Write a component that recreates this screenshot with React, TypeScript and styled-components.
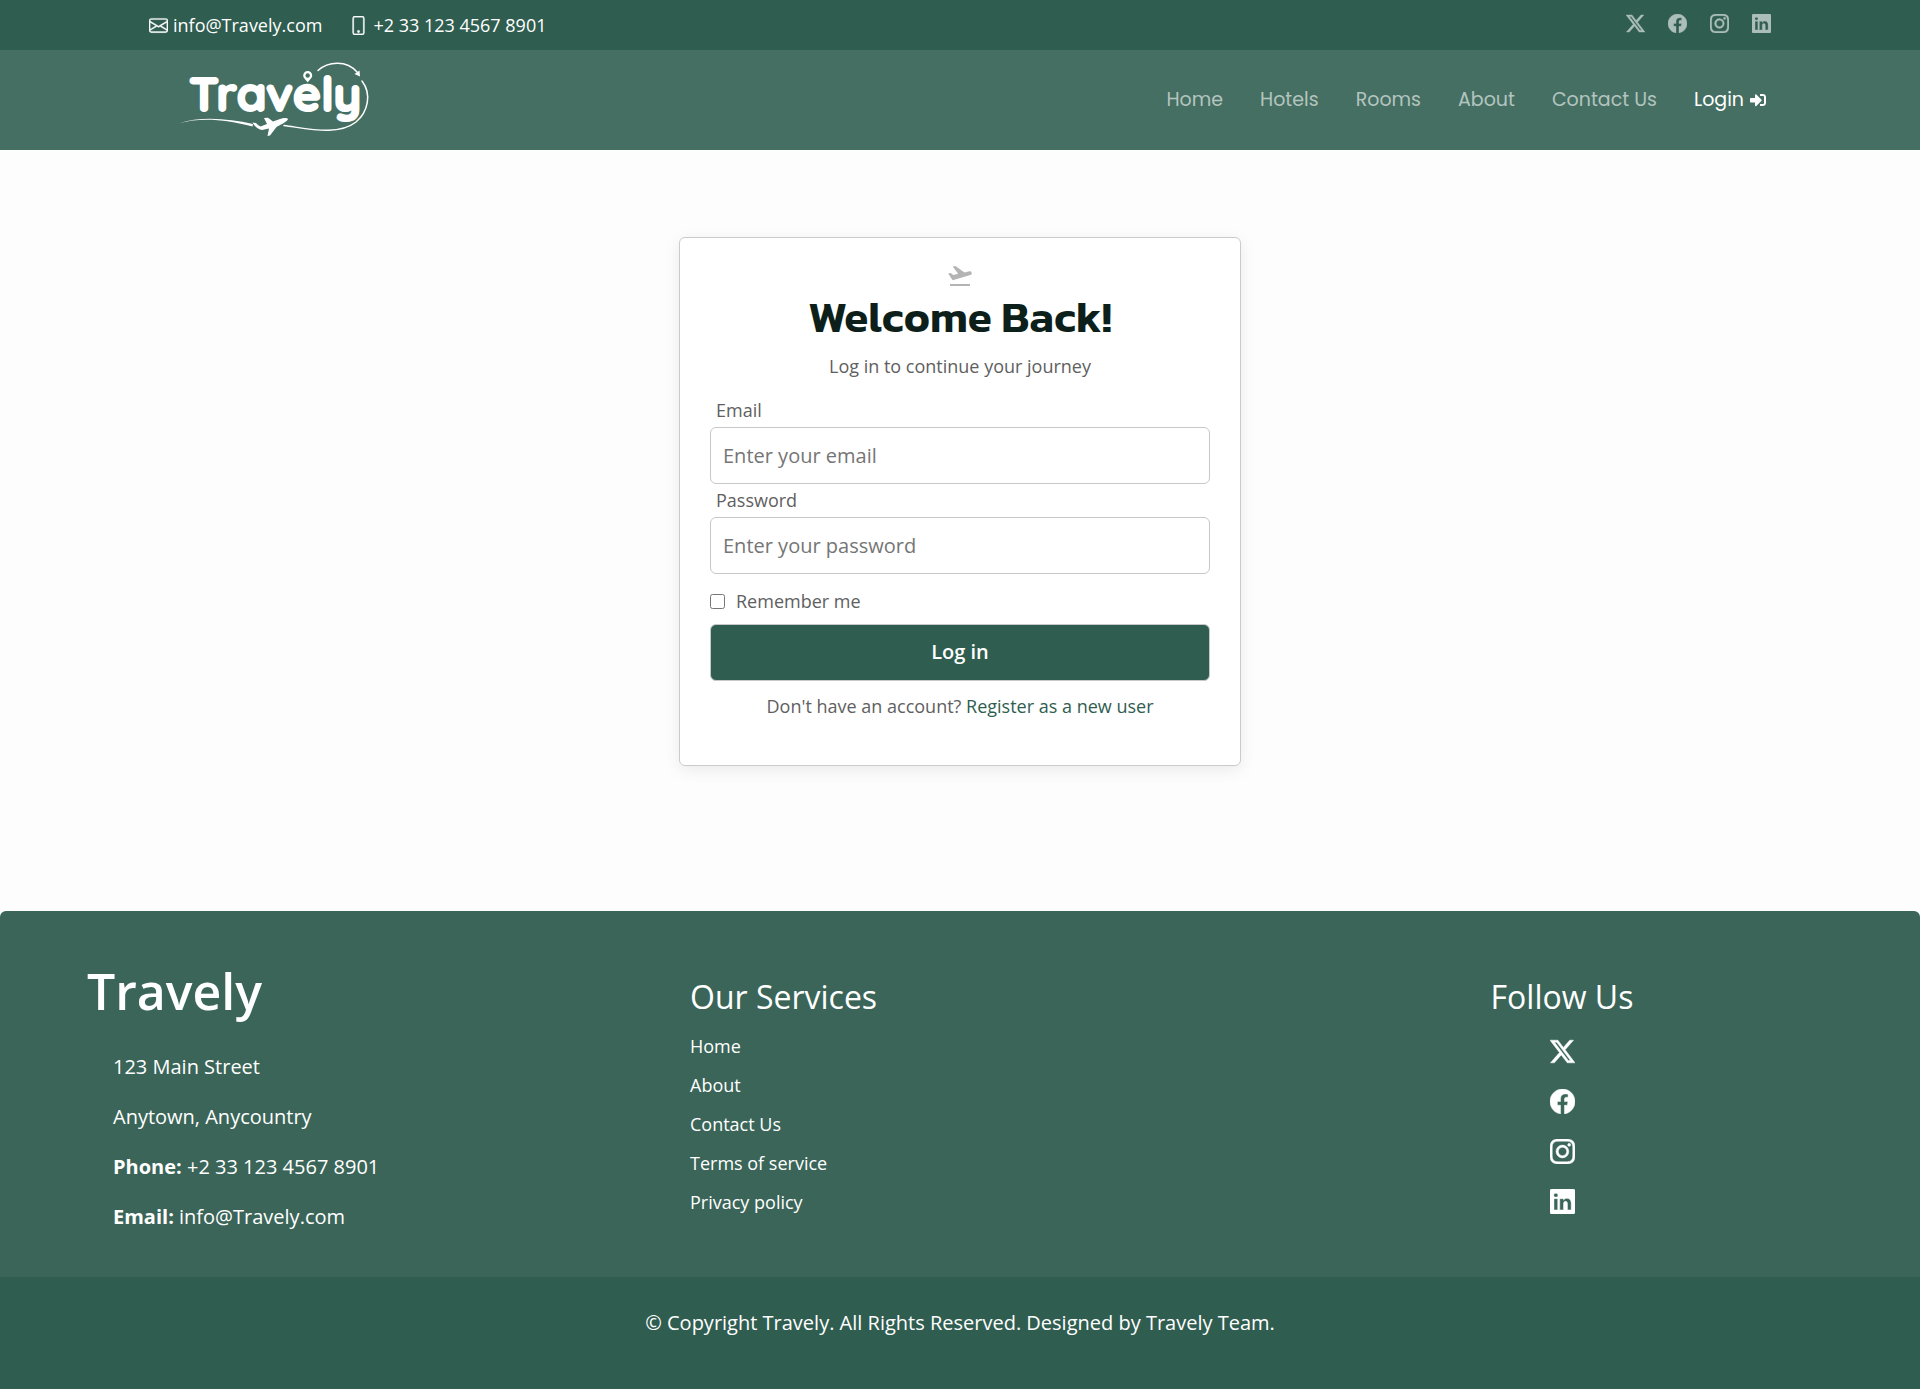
import React from "react";
import styled, { createGlobalStyle } from "styled-components";
import { BsEnvelope, BsFacebook, BsInstagram, BsLinkedin, BsPhone, BsTwitterX } from "react-icons/bs";
import { FaSignInAlt } from "react-icons/fa";

const GlobalStyle = createGlobalStyle`
  *, *::before, *::after { box-sizing: border-box; }
  body {
    margin: 0;
    background: #fdfdfd;
    color: #606060;
    font-family: "Open Sans", "Noto Sans", sans-serif;
    font-size: 18px;
    line-height: 24px;
  }
  a { color: inherit; text-decoration: none; }
  h1, h2, p, ul { margin: 0; padding: 0; }
  ul { list-style: none; }
  svg { display: block; }
`;

const TopBar = styled.div`
  display: flex;
  align-items: center;
  justify-content: space-between;
  height: 50px;
  padding: 0 149px;
  background: #2f5d50;
  color: #fff;
`;

const ContactList = styled.div`
  display: flex;
  gap: 27px;
`;

const ContactLink = styled.a`
  display: flex;
  align-items: center;
  gap: 5px;

  svg { stroke-width: 0.3; }
`;

const TopSocial = styled.div`
  display: flex;
  gap: 23px;
  padding-bottom: 3px;
  color: #acbeb9;

  svg { stroke-width: 0.3; }
`;

const Header = styled.header`
  display: flex;
  align-items: center;
  justify-content: space-between;
  height: 100px;
  padding: 0 154px 0 170px;
  background: #446f62;
`;

const Logo = styled.svg`
  width: 210px;
  height: 90px;
  fill: none;
  stroke: #fff;
  stroke-linecap: round;
  stroke-linejoin: round;
`;

const LogoText = styled.text`
  font-family: Quicksand, Poppins, "Open Sans", sans-serif;
  font-size: 48px;
  font-weight: 700;
  fill: #fff;
  stroke-width: 2px;
`;

const Nav = styled.nav`
  display: flex;
  gap: 37px;
  font-family: Poppins, Inter, sans-serif;
  font-size: 19px;
`;

const NavLink = styled.a<{ $active?: boolean }>`
  display: flex;
  align-items: center;
  gap: 6px;
  color: ${(p) => (p.$active ? "#fff" : "rgba(255, 255, 255, 0.6)")};
`;

const Main = styled.main`
  display: flex;
  justify-content: center;
  padding: 87px 20px 145px;
`;

const Card = styled.form`
  display: flex;
  flex-direction: column;
  width: 100%;
  max-width: 562px;
  padding: 25px 30px 47px;
  border: 1px solid #cacccb;
  border-radius: 6px;
  background: #fff;
  box-shadow: 0 4px 16px rgba(0, 0, 0, 0.08);
`;

const CardIcon = styled.svg`
  align-self: center;
  width: 24px;
  height: 24px;
  fill: #b4b4b4;
`;

const Title = styled.h1`
  color: #0d1f1b;
  font-family: Kanit, "Open Sans", sans-serif;
  font-size: 44px;
  font-weight: 600;
  line-height: 60px;
  text-align: center;
`;

const Subtitle = styled.p`
  padding: 7px 0 16px;
  text-align: center;
`;

const Label = styled.label`
  padding: 4px 6px 5px;
  font-weight: 500;
`;

const Field = styled.input`
  width: 100%;
  height: 57px;
  padding: 0 12px;
  border: 1px solid #c8c8c8;
  border-radius: 6px;
  background: #fff;
  color: #333;
  font: inherit;
  font-size: 20px;

  &::placeholder { color: #757575; }
`;

const Remember = styled.label`
  display: flex;
  align-items: center;
  gap: 11px;
  padding: 15px 0 11px;
`;

const Checkbox = styled.input`
  width: 15px;
  height: 15px;
  margin: 0;
`;

const Submit = styled.button`
  height: 57px;
  padding: 0 0 2px;
  border: 1px solid #c8c8c8;
  border-radius: 6px;
  background: #2f5d50;
  color: #fff;
  font: inherit;
  font-size: 20px;
  font-weight: 600;
`;

const Register = styled.p`
  padding-top: 13px;
  text-align: center;

  a { color: #2f5d50; }
`;

const Footer = styled.footer`
  color: #fff;
`;

const FooterColumns = styled.div`
  display: grid;
  grid-template-columns: 603px 1fr 540px;
  min-height: 366px;
  padding: 55px 88px 24px 87px;
  border-radius: 6px 6px 0 0;
  background: #3a6558;
`;

const Brand = styled.h2`
  font-size: 50px;
  font-weight: 600;
  line-height: 50px;
`;

const Address = styled.div`
  display: grid;
  gap: 26px;
  padding: 39px 26px 0;
  font-size: 20px;
`;

const FooterHeading = styled.h2`
  font-size: 32px;
  font-weight: 500;
  line-height: 40px;
`;

const Services = styled.div`
  padding-top: 11px;
`;

const ServiceList = styled.ul`
  display: grid;
  gap: 15px;
  padding-top: 17px;
`;

const Follow = styled.div`
  display: flex;
  flex-direction: column;
  align-items: center;
  padding-top: 11px;
`;

const SocialList = styled.ul`
  display: grid;
  gap: 25px;
  padding-top: 22px;

  svg { stroke-width: 0.3; }
`;

const Copyright = styled.div`
  min-height: 112px;
  padding: 34px 20px;
  background: #2f5d50;
  font-size: 20px;
  text-align: center;
`;

const navItems = ["Home", "Hotels", "Rooms", "About", "Contact Us"];
const services = ["Home", "About", "Contact Us", "Terms of service", "Privacy policy"];
const socials = [
  { name: "X", Icon: BsTwitterX },
  { name: "Facebook", Icon: BsFacebook },
  { name: "Instagram", Icon: BsInstagram },
  { name: "LinkedIn", Icon: BsLinkedin },
];

function TravelyLogo() {
  return (
    <a href="#" aria-label="Travely home">
      <Logo viewBox="0 0 210 90">
        <LogoText x="19" y="56">Travely</LogoText>
        {/* map pin above the e */}
        <path d="M137.700 16a4.500 4.500 0 0 0-4.500 4.500c0 2.700 3 4.500 4.500 7 1.500-2.500 4.500-4.300 4.500-7a4.500 4.500 0 0 0-4.500-4.500z" fill="#fff" stroke="none" />
        <circle cx="137.700" cy="20.500" r="2.200" fill="#446f62" stroke="none" />
        {/* flight path */}
        <path d="M148 15.500C158 6 177 5 187 17" strokeWidth="1.500" />
        <path d="M184.500 19l5.500 2.500-.5-6z" fill="#fff" stroke="none" />
        <path d="M192 26C202 39 198 57 186 67C168 81 140 74 114 70.500" strokeWidth="1.500" />
        <path d="M9 68.500C30 61 58 63.500 83 69L82.500 71.500C56 65 32 62 9 68.500z" fill="#fff" stroke="none" />
        {/* plane */}
        <path d="M82.500 67.500c2 0 4 .5 5.500 2.500l2.500 1.500 6.500-2.500-3-6 4-.2 5 3.700 7-2.500c3-1.200 7-1.500 8 0 0 1.500-4 4-7 5.500l-4.500 2.500-6.500 8.500-2.500.5 1.500-7.500-7 1.500c-5-1-7.500-4-9.500-7.500z" fill="#fff" stroke="none" />
      </Logo>
    </a>
  );
}

function TakeoffIcon() {
  return (
    <CardIcon viewBox="0 0 24 24" aria-hidden="true">
      <path d="M.2 10.600L2.700 10l2.600 2 4.800-1.200L4.800 3.600 7.400 3l9.100 6.600 5-1.300c1.100-.2 2 .4 2.200 1.400.2 1-.3 2-1.300 2.300L4.600 17.300z" />
      <path d="M2 21h20v2H2z" />
    </CardIcon>
  );
}

export default function App() {
  return (
    <>
      <GlobalStyle />
      <TopBar>
        <ContactList>
          <ContactLink href="mailto:info@Travely.com"><BsEnvelope size={19} />info@Travely.com</ContactLink>
          <ContactLink href="tel:+23312345678901"><BsPhone size={19} />+2 33 123 4567 8901</ContactLink>
        </ContactList>
        <TopSocial>
          {socials.map(({ name, Icon }) => (
            <a key={name} href="#" aria-label={name}><Icon size={19} /></a>
          ))}
        </TopSocial>
      </TopBar>
      <Header>
        <TravelyLogo />
        <Nav>
          {navItems.map((item) => <NavLink key={item} href="#">{item}</NavLink>)}
          <NavLink href="#" $active>Login <FaSignInAlt size={16} /></NavLink>
        </Nav>
      </Header>
      <Main>
        <Card onSubmit={(e) => e.preventDefault()}>
          <TakeoffIcon />
          <Title>Welcome Back!</Title>
          <Subtitle>Log in to continue your journey</Subtitle>
          <Label htmlFor="email">Email</Label>
          <Field id="email" type="email" placeholder="Enter your email" />
          <Label htmlFor="password">Password</Label>
          <Field id="password" type="password" placeholder="Enter your password" />
          <Remember><Checkbox type="checkbox" />Remember me</Remember>
          <Submit type="submit">Log in</Submit>
          <Register>Don't have an account? <a href="#">Register as a new user</a></Register>
        </Card>
      </Main>
      <Footer>
        <FooterColumns>
          <div>
            <Brand>Travely</Brand>
            <Address>
              <p>123 Main Street</p>
              <p>Anytown, Anycountry</p>
              <p><strong>Phone:</strong> +2 33 123 4567 8901</p>
              <p><strong>Email:</strong> info@Travely.com</p>
            </Address>
          </div>
          <Services>
            <FooterHeading>Our Services</FooterHeading>
            <ServiceList>
              {services.map((item) => <li key={item}><a href="#">{item}</a></li>)}
            </ServiceList>
          </Services>
          <Follow>
            <FooterHeading>Follow Us</FooterHeading>
            <SocialList>
              {socials.map(({ name, Icon }) => (
                <li key={name}><a href="#" aria-label={name}><Icon size={25} /></a></li>
              ))}
            </SocialList>
          </Follow>
        </FooterColumns>
        <Copyright>© Copyright Travely. All Rights Reserved. Designed by Travely Team.</Copyright>
      </Footer>
    </>
  );
}
